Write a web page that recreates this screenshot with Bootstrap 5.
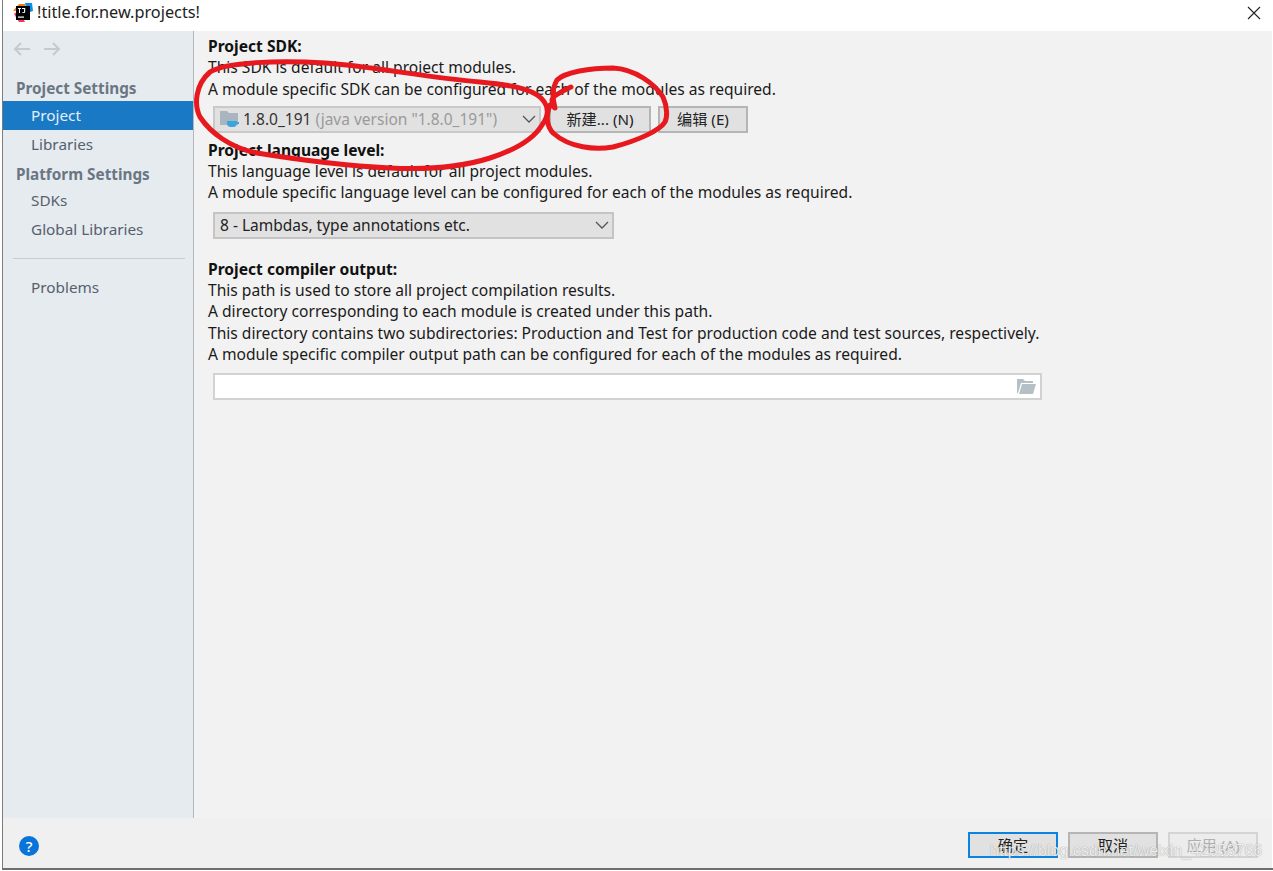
<!DOCTYPE html>
<html lang="en">
<head>
  <meta charset="UTF-8">
  <meta name="viewport" content="width=device-width, initial-scale=1">
  <title>!title.for.new.projects!</title>
  <link href="https://cdn.jsdelivr.net/npm/bootstrap@5.3.3/dist/css/bootstrap.min.css" rel="stylesheet">
  <style>
    html, body { height: 871px; overflow: hidden; }
    body { background: #fff; font-family: "Noto Sans", "Noto Sans CJK SC", sans-serif; font-size: 15.6px; line-height: 21.3px; color: #1a1a1a; }
    .win { position: relative; width: 1271px; height: 870px; margin-left: 2px; padding-right: 1px; border-left: 1px solid #7d7d7d; border-bottom: 2px solid #6e6e6e; }
    .title-bar { height: 31px; background: #fff; font-size: 16.3px; padding: 0 0 6px 10px; }
    .title-text { color: #222; margin-left: 4px; }
    .close-x { width: 14px; height: 14px; margin-right: 11px; }
    .main-area { height: 787px; background: #f2f2f2; }
    .side { width: 191px; background: #e6ebf0; border-right: 1px solid #b4b8bc; flex: none; font-size: 15.3px; }
    .side-arrows { height: 41px; padding: 10px 0 0 10px; gap: 12px; }
    .side-head { font-weight: 700; color: #6a7683; padding-left: 13px; height: 29px; line-height: 32px; }
    .side-head.tight { height: 27px; line-height: 31px; }
    .side-item { color: #56616d; padding: 0 0 0 28px; height: 29px; line-height: 29px; border-radius: 0; }
    .side-item.active { background: #1a79c4; color: #e4eef7; }
    .side-sep { height: 1px; background: #c8ccd0; margin: 14px 8px 14px 10px; }
    .content { padding: 5px 0 0 14px; }
    .sec-head { font-weight: 700; color: #111; }
    .gap-sdk { margin-bottom: 6px; }
    .gap-sdk-row { margin-bottom: 7px; }
    .gap-lang { margin-bottom: 8px; }
    .gap-output { margin-top: 20px; }
    .gap-box { margin-bottom: 8px; }
    .combo-sdk { width: 328px; height: 27px; margin-left: 5px; padding: 0 0 0 5px; background-color: #e1e1e1; border: 2px solid #c9c9c9; border-radius: 0; font-size: 15.5px; line-height: 23px; color: #333; }
    .combo-sdk .dim { color: #9a9a9a; margin-left: 4px; }
    .lang-select { width: 401px; height: 27px; margin-left: 5px; padding: 0 0 0 5px; background-color: #e1e1e1; border: 2px solid #c4c4c4; border-radius: 0; font-size: 15.5px; line-height: 23px; color: #222; }
    .combo-sdk, .lang-select { background-image: url("data:image/svg+xml,%3csvg xmlns='http://www.w3.org/2000/svg' viewBox='0 0 14 14'%3e%3cpath fill='none' stroke='%23555' stroke-width='1.3' d='M1 4l6 6 6-6'/%3e%3c/svg%3e"); background-size: 14px 14px; background-position: right 3px center; }
    .ide-btn { height: 27px; padding: 0; background: #e1e1e1; border: 2px solid #b5b5b5; border-radius: 0; font-size: 15.2px; line-height: 22px; color: #222; }
    .w-new { width: 102px; margin-left: 8px; }
    .w-edit { width: 90px; margin-left: 7px; }
    .output-box { width: 829px; height: 27px; margin-left: 5px; background: #fff; border: 2px solid #d2d2d2; }
    .foot-bar { height: 50px; background: #f0f0f0; padding: 14px 14px 0 16px; }
    .help-dot { width: 20px; height: 20px; margin-top: 4px; background: #0b74d9; color: #fff; font-size: 15px; line-height: 20px; font-weight: 500; text-align: center; }
    .foot-btns { gap: 10px; }
    .foot-btn { width: 90px; height: 26px; line-height: 21px; }
    .foot-btn.primary-def { border-color: #0a84e0; }
    .foot-btn.off { border-color: #d4d4d4; background: #ececec; color: #b0b0b0; opacity: 1; }
    .scribble { position: absolute; left: -3px; top: 0; width: 1273px; height: 871px; pointer-events: none; }
    .mark-text { position: absolute; left: 987px; top: 841px; font-family: "Liberation Sans", sans-serif; font-size: 16px; line-height: 20px; color: rgba(255,255,255,.85); text-shadow: 0 0 1px rgba(90,90,90,.7); white-space: nowrap; }
  </style>
</head>
<body>
  <div class="win">
    <!-- title -->
    <div class="title-bar d-flex align-items-center">
      <svg width="20" height="20" viewBox="0 0 20 20">
        <path d="M0 8 6 1h6v6z" fill="#f97a12"/>
        <path d="M12 0h7l1 8-6 2z" fill="#0b8fe8"/>
        <path d="M1 11l5 8h6L5 8z" fill="#fe315d"/>
        <rect x="3" y="3" width="14" height="14" fill="#000"/>
        <rect x="5" y="13.5" width="6" height="1.2" fill="#fff"/>
        <path d="M5 5h3v.9H7V10H6V5.900H5zM9 5h3.200v3.800q0 1.300-1.500 1.300H9.300V9.200h1.100q.7 0 .7-.6V5.900H9z" fill="#fff"/>
      </svg>
      <span class="title-text">!title.for.new.projects!</span>
      <svg class="close-x ms-auto" viewBox="0 0 14 14"><path d="M1 1l12 12M13 1 1 13" stroke="#222" stroke-width="1.100" fill="none"/></svg>
    </div>

    <div class="main-area d-flex">
      <!-- left tree -->
      <div class="side">
        <div class="side-arrows d-flex">
          <svg width="18" height="16" viewBox="0 0 18 16"><path d="M17 8H2M8 2 2 8l6 6" stroke="#c6cacd" stroke-width="2" fill="none"/></svg>
          <svg width="18" height="16" viewBox="0 0 18 16"><path d="M1 8h15M10 2l6 6-6 6" stroke="#c6cacd" stroke-width="2" fill="none"/></svg>
        </div>
        <div class="side-head">Project Settings</div>
        <div class="nav flex-column">
          <a class="nav-link side-item active">Project</a>
          <a class="nav-link side-item">Libraries</a>
        </div>
        <div class="side-head tight">Platform Settings</div>
        <div class="nav flex-column">
          <a class="nav-link side-item">SDKs</a>
          <a class="nav-link side-item">Global Libraries</a>
        </div>
        <div class="side-sep"></div>
        <div class="nav flex-column">
          <a class="nav-link side-item">Problems</a>
        </div>
      </div>

      <!-- form -->
      <div class="content flex-grow-1">
        <div class="sec-head">Project SDK:</div>
        <div>This SDK is default for all project modules.</div>
        <div class="gap-sdk">A module specific SDK can be configured for each of the modules as required.</div>
        <div class="d-flex gap-sdk-row">
          <div class="form-select combo-sdk d-flex align-items-center">
            <svg class="flex-shrink-0" width="19" height="18" viewBox="0 0 19 18">
              <path d="M0 1h7l2 2h9v12H0z" fill="#a9b6c0"/>
              <path d="M7 11h10v2q0 4-4 4h-2q-4 0-4-4zM17 12h2v2h-2z" fill="#3ba3dd"/>
            </svg>
            <span class="ms-1">1.8.0_191</span><span class="dim">(java version "1.8.0_191")</span>
          </div>
          <button class="btn ide-btn w-new" type="button">新建... (N)</button>
          <button class="btn ide-btn w-edit" type="button">编辑 (E)</button>
        </div>
        <div class="sec-head">Project language level:</div>
        <div>This language level is default for all project modules.</div>
        <div class="gap-lang">A module specific language level can be configured for each of the modules as required.</div>
        <select class="form-select lang-select">
          <option>8 - Lambdas, type annotations etc.</option>
        </select>
        <div class="sec-head gap-output">Project compiler output:</div>
        <div>This path is used to store all project compilation results.</div>
        <div>A directory corresponding to each module is created under this path.</div>
        <div>This directory contains two subdirectories: Production and Test for production code and test sources, respectively.</div>
        <div class="gap-box">A module specific compiler output path can be configured for each of the modules as required.</div>
        <div class="output-box d-flex align-items-center justify-content-end pe-1">
          <svg width="19" height="15" viewBox="0 0 19 15">
            <path d="M0 0h6l2 2h8v2H4L1 14H0z" fill="#b4bfc6"/>
            <path d="M5 5h14l-3 10H2z" fill="#b4bfc6"/>
          </svg>
        </div>
      </div>
    </div>

    <!-- buttons -->
    <div class="foot-bar d-flex">
      <div class="help-dot rounded-circle">?</div>
      <div class="ms-auto d-flex foot-btns">
        <button class="btn ide-btn foot-btn primary-def" type="button">确定</button>
        <button class="btn ide-btn foot-btn" type="button">取消</button>
        <button class="btn ide-btn foot-btn off" type="button" disabled>应用 (A)</button>
      </div>
    </div>

    <!-- red pen marks over the dialog -->
    <svg class="scribble" viewBox="0 0 1273 871" fill="none" stroke="#e8181f" stroke-width="5" stroke-linecap="round" stroke-linejoin="round">
      <path d="M210 72C225 62 280 60 325 63C370 66 430 78 480 82C510 85 530 88 541 98C549 106 549 116 542 125C533 140 515 150 490 158C465 166 430 170 390 168C350 166 300 160 257 153C230 148 210 132 200 117C194 105 195 85 210 72Z"/>
      <path d="M571 87C560 92 552 97 552 100C552 104 554 108 555 108C553 100 551 90 557 80C565 72 590 68 613 68C635 69 655 84 663 97C668 108 667 118 665 122C660 130 640 140 613 147C595 150 570 148 553 133C546 125 546 115 550 105"/>
    </svg>
    <div class="mark-text">https://blog.csdn.net/weixin_42358766</div>
  </div>

  <script src="https://cdn.jsdelivr.net/npm/bootstrap@5.3.3/dist/js/bootstrap.bundle.min.js"></script>
</body>
</html>
